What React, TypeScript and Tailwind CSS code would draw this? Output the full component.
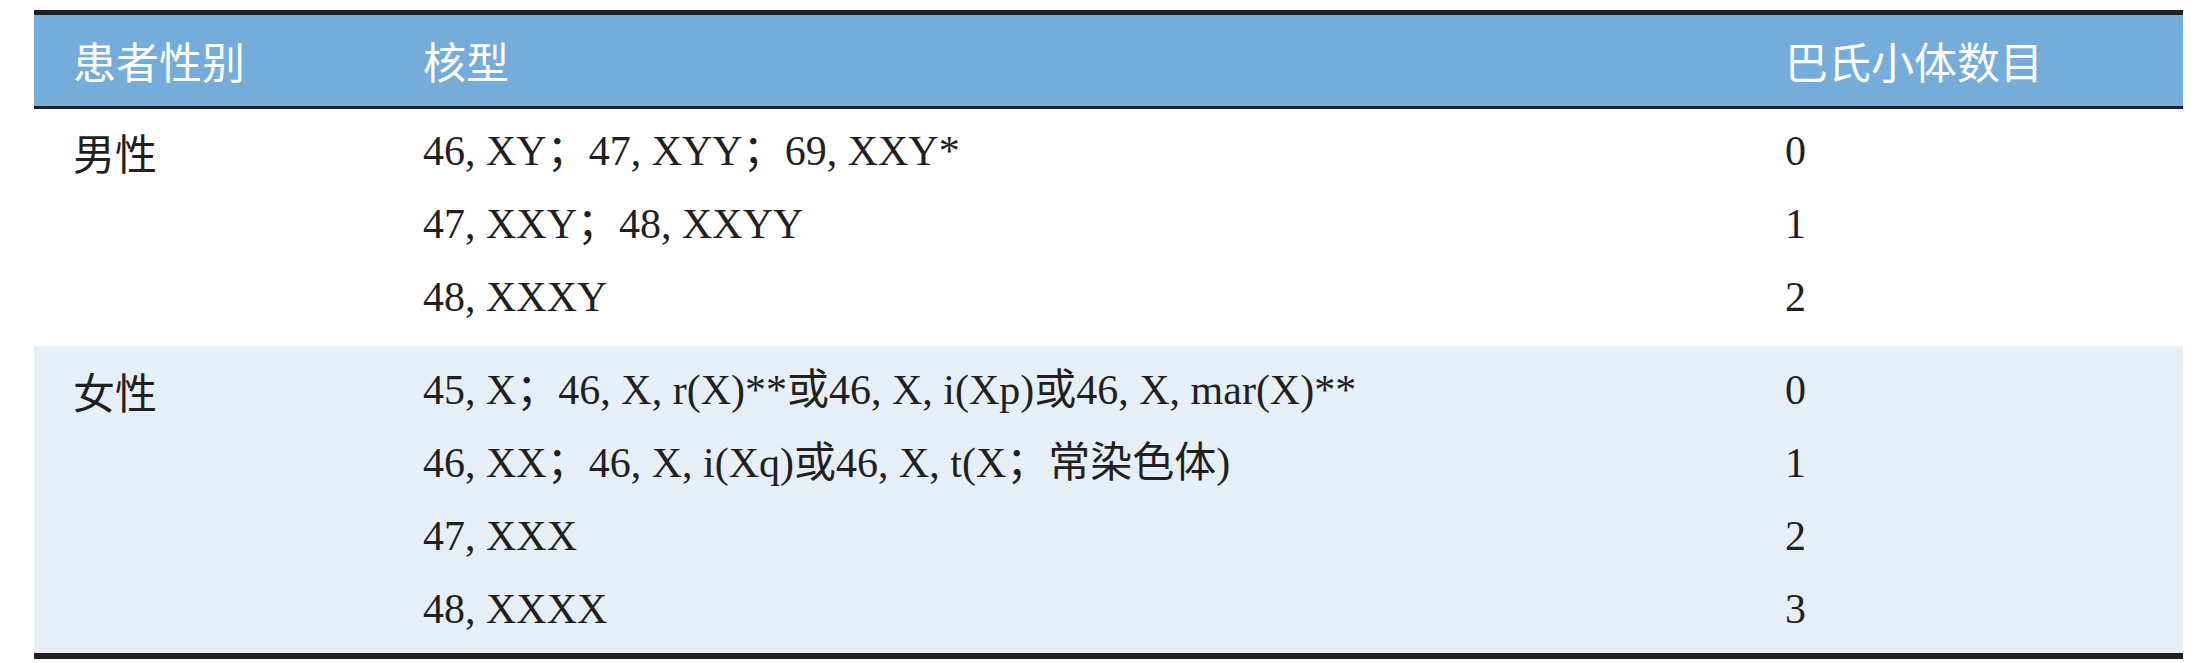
import React from "react";

// 巴氏小体 table: each group has its sex label on the first line only
const groups = [
  {
    sex: "男性",
    rows: [
      { karyotype: "46, XY；47, XYY；69, XXY*", count: "0" },
      { karyotype: "47, XXY；48, XXYY", count: "1" },
      { karyotype: "48, XXXY", count: "2" },
    ],
    className: "bg-white pt-[6px] pb-[12px]",
  },
  {
    sex: "女性",
    rows: [
      { karyotype: "45, X；46, X, r(X)**或46, X, i(Xp)或46, X, mar(X)**", count: "0" },
      { karyotype: "46, XX；46, X, i(Xq)或46, X, t(X；常染色体)", count: "1" },
      { karyotype: "47, XXX", count: "2" },
      { karyotype: "48, XXXX", count: "3" },
    ],
    className: "bg-[#e6eff8] pt-[8px] pb-[7px]",
  },
];

const cols = "grid grid-cols-[370px_1359px_420px]";
const bodyFont = "font-['Liberation_Serif','Noto_Sans_CJK_SC',serif]";

export default function App() {
  return (
    <div className="min-h-[663px] bg-white pt-[10px] pl-[34px]">
      <div className="w-[2149px]">
        {/* Header */}
        <div
          className={`${cols} h-[99px] items-center border-t-[5px] border-b-[3px] border-[#231f20] bg-[#75acd9] text-[43px] font-normal text-white font-['Noto_Sans_CJK_SC',sans-serif]`}
        >
          <div className="pl-[39px]">患者性别</div>
          <div className="pl-[19px]">核型</div>
          <div className="pl-[22px]">巴氏小体数目</div>
        </div>

        {/* Body */}
        {groups.map((group) => (
          <div key={group.sex} className={group.className}>
            {group.rows.map((row, i) => (
              <div
                key={row.karyotype}
                className={`${cols} h-[73px] text-[42px] leading-[73px] text-[#231f20] ${bodyFont}`}
              >
                <div className="pl-[39px] font-['Noto_Sans_CJK_SC',sans-serif]">{i === 0 ? group.sex : ""}</div>
                <div className="pl-[19px] whitespace-nowrap">{row.karyotype}</div>
                <div className="pl-[22px]">{row.count}</div>
              </div>
            ))}
          </div>
        ))}

        <div className="h-[6px] bg-[#231f20]" />
      </div>
    </div>
  );
}
